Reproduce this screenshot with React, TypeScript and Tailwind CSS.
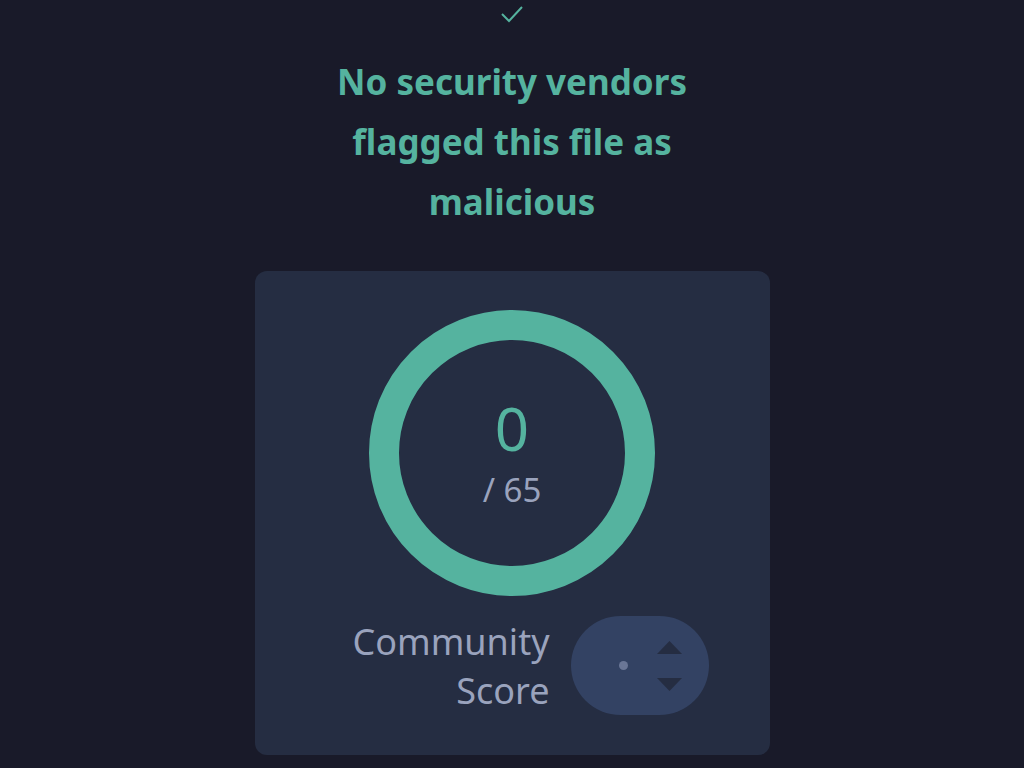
import React from "react";

const TEAL = "#55b39f";

function ScoreRing({ score, total }: { score: number; total: number }) {
  return (
    <div className="relative w-[288px] h-[288px]">
      <svg width="288" height="288" viewBox="0 0 288 288" className="absolute inset-0">
        <circle cx="144" cy="144" r="128" fill="none" stroke={TEAL} strokeWidth="30" />
      </svg>
      <div className="absolute inset-0 flex flex-col items-center pt-[89px]">
        <span className="text-[60px] leading-none text-[#55b39f]">{score}</span>
        <span className="text-[33px] leading-none text-[#9aa3bd] mt-[15px]">/ {total}</span>
      </div>
    </div>
  );
}

function VoteStepper() {
  return (
    <div className="flex items-center w-[138px] h-[99px] rounded-full bg-[#334263] pl-[48px] pr-[27px]">
      <div className="w-[9px] h-[9px] rounded-full bg-[#6a7696]" />
      <div className="ml-auto flex flex-col items-center gap-[24px]">
        <svg width="25" height="13" viewBox="0 0 25 13">
          <path d="M12.5 0 L25 13 L0 13 Z" fill="#252d42" />
        </svg>
        <svg width="25" height="13" viewBox="0 0 25 13">
          <path d="M0 0 L25 0 L12.5 13 Z" fill="#252d42" />
        </svg>
      </div>
    </div>
  );
}

export default function App() {
  return (
    <div
      className="min-h-[768px] w-full bg-[#191a29] flex flex-col items-center"
      style={{ fontFamily: '"Noto Sans", "Open Sans", sans-serif' }}
    >
      <svg width="26" height="20" viewBox="0 0 26 20" className="mt-[4px]">
        <path d="M3 10 L10 17 L23 3" fill="none" stroke={TEAL} strokeWidth="2" />
      </svg>

      <h1 className="mt-[28px] w-[400px] text-center text-[35px] leading-[60px] font-bold text-[#55b39f]">
        No security vendors flagged this file as malicious
      </h1>

      <div className="mt-[39px] w-[515px] h-[484px] rounded-[12px] bg-[#252d42] flex flex-col items-center pt-[38px]">
        <ScoreRing score={0} total={65} />
        <div className="mt-[19px] flex items-center gap-[21px] pl-[37px]">
          <div className="text-right text-[36px] leading-[49px] text-[#9aa3bd]">
            Community
            <br />
            Score
          </div>
          <VoteStepper />
        </div>
      </div>
    </div>
  );
}
